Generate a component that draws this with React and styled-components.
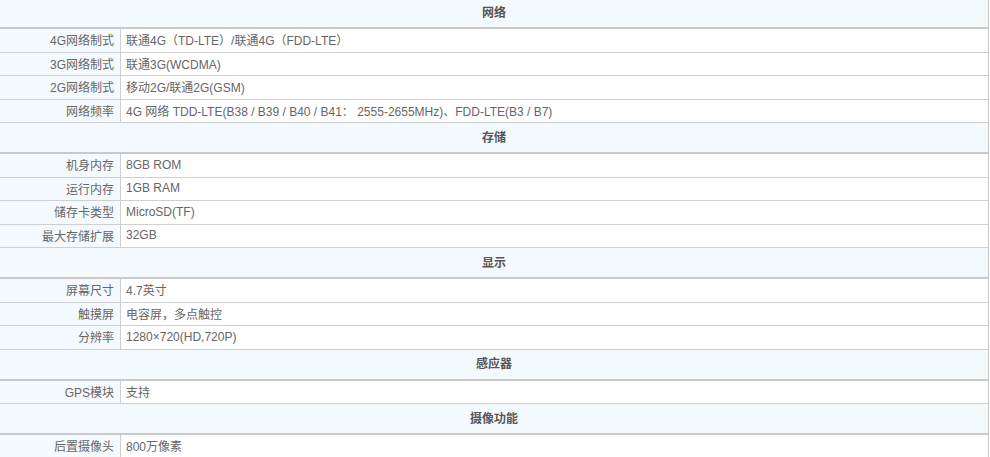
import React from 'react';
import styled, { createGlobalStyle } from 'styled-components';

const GlobalStyle = createGlobalStyle`
  html, body {
    margin: 0;
    padding: 0;
    background: #fff;
    overflow: hidden;
  }
  body {
    font-family: "Liberation Sans", Arial, "Noto Sans CJK SC", sans-serif;
    font-size: 12px;
    color: #666;
  }
`;

const SpecTable = styled.div`
  width: 989px;
  margin-top: -2px;
  display: flex;
  flex-direction: column;
`;

const SectionHead = styled.div`
  height: 26px;
  padding-bottom: 3px;
  border-bottom: 2px solid #c9c9c9;
  border-right: 1px solid #c9c9c9;
  background: #f4f9fd;
  display: flex;
  align-items: center;
  justify-content: center;
  font-weight: bold;
  color: #555;
  font-family: "Noto Sans CJK SC", sans-serif;
`;

const Row = styled.div`
  height: 22.5px;
  border-bottom: 1px solid #cfcfcf;
  border-right: 1px solid #c9c9c9;
  display: flex;
`;

const Label = styled.div`
  width: 114px;
  flex: none;
  padding-right: 6px;
  padding-bottom: 1px;
  border-right: 1px solid #cfcfcf;
  background: #f4f9fd;
  display: flex;
  align-items: center;
  justify-content: flex-end;
  white-space: nowrap;
`;

const Value = styled.div`
  flex: 1;
  padding-left: 5px;
  padding-bottom: 1px;
  display: flex;
  align-items: center;
  white-space: nowrap;
`;

const specs = [
  {
    title: '网络',
    rows: [
      ['4G网络制式', '联通4G（TD-LTE）/联通4G（FDD-LTE）'],
      ['3G网络制式', '联通3G(WCDMA)'],
      ['2G网络制式', '移动2G/联通2G(GSM)'],
      ['网络频率', '4G 网络 TDD-LTE(B38 / B39 / B40 / B41： 2555-2655MHz)、FDD-LTE(B3 / B7)'],
    ],
  },
  {
    title: '存储',
    rows: [
      ['机身内存', '8GB ROM'],
      ['运行内存', '1GB RAM'],
      ['储存卡类型', 'MicroSD(TF)'],
      ['最大存储扩展', '32GB'],
    ],
  },
  {
    title: '显示',
    rows: [
      ['屏幕尺寸', '4.7英寸'],
      ['触摸屏', '电容屏，多点触控'],
      ['分辨率', '1280×720(HD,720P)'],
    ],
  },
  {
    title: '感应器',
    rows: [['GPS模块', '支持']],
  },
  {
    title: '摄像功能',
    rows: [['后置摄像头', '800万像素']],
  },
];

const App = () => (
  <>
    <GlobalStyle />
    <SpecTable>
      {specs.map(section => (
        <React.Fragment key={section.title}>
          <SectionHead>{section.title}</SectionHead>
          {section.rows.map(([label, value]) => (
            <Row key={label}>
              <Label>{label}</Label>
              <Value>{value}</Value>
            </Row>
          ))}
        </React.Fragment>
      ))}
    </SpecTable>
  </>
);

export default App;
